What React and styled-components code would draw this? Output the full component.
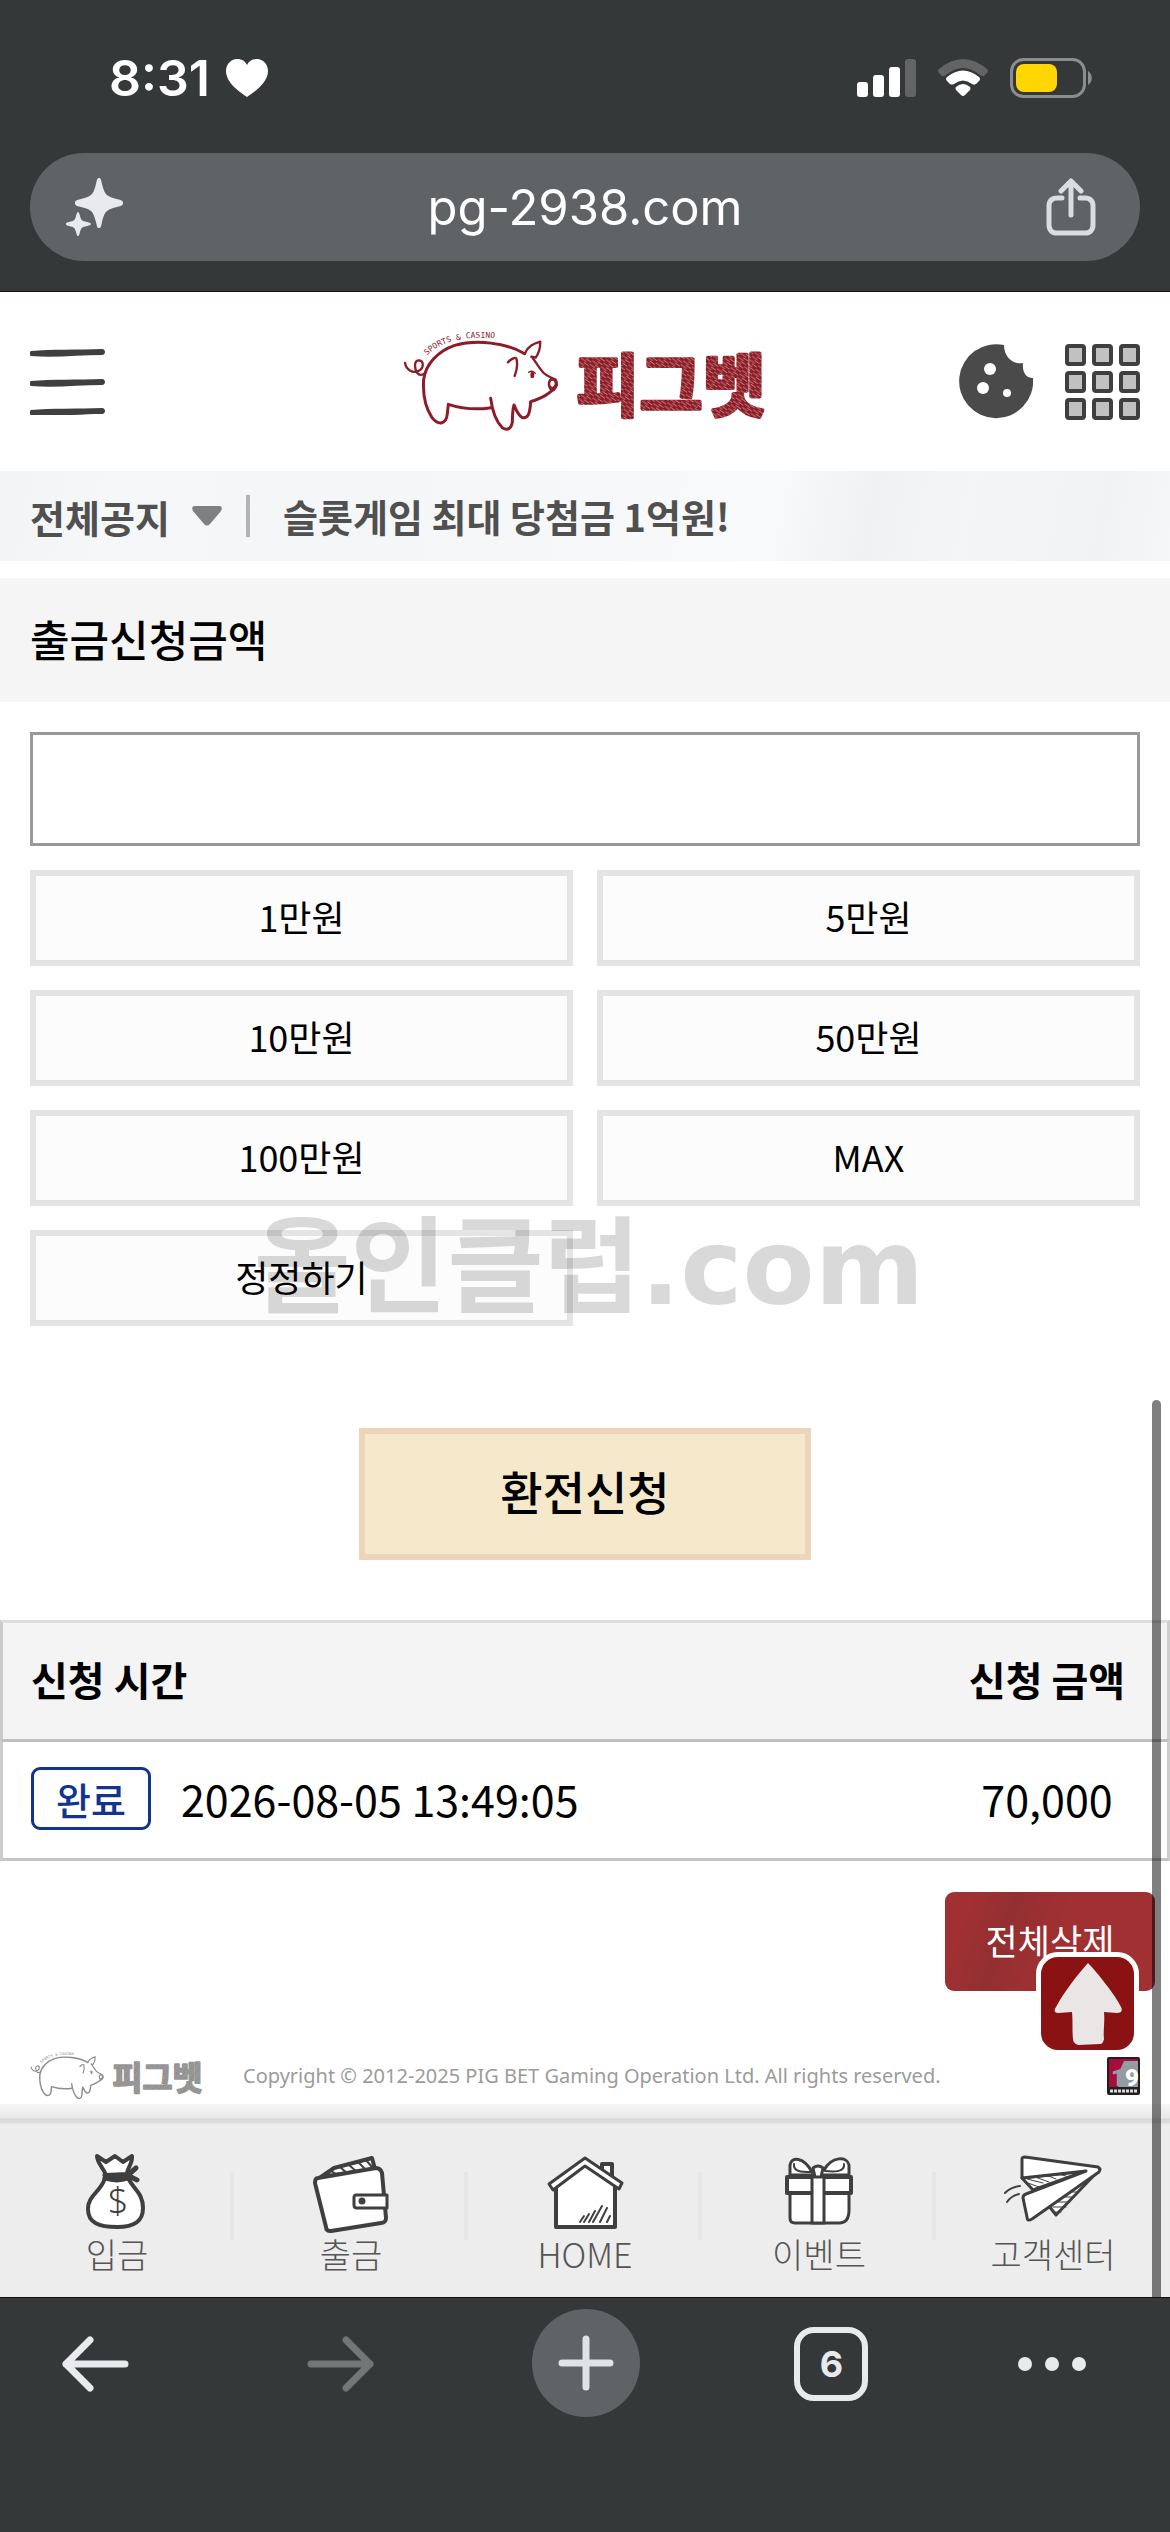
import styled, { createGlobalStyle } from "styled-components";

const chromeBg = "#353839";
const chromePill = "#5f6365";
const chromeInk = "#e8eaed";
const ink = "#3f3f3f";

const GlobalStyle = createGlobalStyle`
  * {
    box-sizing: border-box;
  }
  body {
    margin: 0;
    background: ${chromeBg};
    color: #000;
    font-family: "Noto Sans CJK KR", "Noto Sans", sans-serif;
  }
  button, input, select {
    font: inherit;
    color: inherit;
    margin: 0;
    padding: 0;
    border: 0;
    background: none;
  }
  a {
    color: inherit;
    text-decoration: none;
  }
  svg {
    display: block;
    flex: none;
  }
`;

const Screen = styled.div`
  display: flex;
  flex-direction: column;
  min-height: 100vh;
`;

/* browser chrome */

const BrowserTop = styled.header`
  background: ${chromeBg};
  border-bottom: 1px solid #111;
  padding-bottom: 30px;
  font-family: Inter, sans-serif;
`;

const StatusBar = styled.div`
  display: flex;
  align-items: center;
  justify-content: space-between;
  height: 153px;
  padding: 2px 77px 0 109px;
  color: #fff;
`;

const StatusGroup = styled.div`
  display: flex;
  align-items: center;
  gap: ${(props) => props.$gap}px;
`;

const Clock = styled.span`
  font-size: 50px;
  font-weight: 600;
`;

const AddressBar = styled.div`
  display: flex;
  align-items: center;
  height: 108px;
  margin: 0 30px;
  padding: 0 44px 0 36px;
  border-radius: 54px;
  background: ${chromePill};
`;

const Address = styled.input`
  flex: 1;
  min-width: 0;
  height: 100%;
  color: #fff;
  font-size: 49px;
  text-align: center;
`;

const IconButton = styled.button`
  display: flex;
  align-items: center;
  justify-content: center;
`;

const BrowserBottom = styled.nav`
  display: grid;
  grid-template-columns: 19fr 30fr 19fr 30fr 14fr;
  justify-items: center;
  align-items: start;
  flex: 1;
  min-height: 235px;
  padding: 11px 48px 0 0;
  border-top: 1px solid #111;
  background: ${chromeBg};
`;

const ToolButton = styled(IconButton)`
  width: 74px;
  height: 110px;
`;

const NewTab = styled(IconButton)`
  width: 108px;
  height: 108px;
  border-radius: 50%;
  background: ${chromePill};
`;

const TabCount = styled.span`
  display: flex;
  align-items: center;
  justify-content: center;
  width: 74px;
  height: 74px;
  border: 6px solid ${chromeInk};
  border-radius: 20px;
  color: ${chromeInk};
  font-family: Inter, sans-serif;
  font-size: 36px;
  font-weight: 700;
`;

/* site */

const Site = styled.div`
  position: relative;
  background: #fff;
`;

const ScrollThumb = styled.div`
  position: absolute;
  z-index: 3;
  top: 1108px;
  right: 9px;
  bottom: 0;
  width: 9px;
  border-radius: 5px 5px 0 0;
  background: rgba(0, 0, 0, 0.5);
`;

const SiteHeader = styled.header`
  display: grid;
  grid-template-columns: 1fr auto 1fr;
  align-items: center;
  height: 179px;
  padding: 0 30px;
`;

const MenuButton = styled(IconButton)`
  justify-self: start;
`;

const HeaderActions = styled.div`
  display: flex;
  justify-content: flex-end;
  gap: 32px;
`;

const NoticeBar = styled.div`
  display: flex;
  align-items: center;
  height: 90px;
  padding: 0 30px;
  background: linear-gradient(
    100deg,
    #f3f4f5,
    #f6f7f8 10%,
    #f4f6f7 30%,
    #f7f9fa 66%,
    #eff1f2 74%,
    #f3f5f6 82%,
    #f0f2f3 94%,
    #f6f7f8
  );
  color: #505050;
  font-size: 38px;
  font-weight: 700;
`;

const NoticeSelect = styled.div`
  display: flex;
  align-items: center;
  gap: 22px;
  margin-right: 24px;

  select {
    appearance: none;
    cursor: pointer;
  }
`;

const NoticeText = styled.span`
  padding-left: 33px;
  border-left: 4px solid #b4b4b4;
  line-height: 42px;
`;

const SectionTitle = styled.label`
  display: flex;
  align-items: center;
  height: 124px;
  margin-top: 17px;
  padding: 0 30px 4px;
  background: #f5f5f5;
  font-size: 43px;
  font-weight: 500;
`;

const Form = styled.form`
  padding: 30px 30px 60px;
`;

const AmountInput = styled.input`
  display: block;
  width: 100%;
  height: 114px;
  padding: 0 24px;
  border: 3px solid #999;
  background: #fff;
  font-size: 43px;
`;

const AmountGrid = styled.div`
  position: relative;
  display: grid;
  grid-template-columns: 1fr 1fr;
  gap: 24px;
  margin: 24px 0 102px;
`;

const AmountButton = styled.button`
  height: 96px;
  padding-bottom: 4px;
  border: 6px solid #e4e4e4;
  background: #fcfcfc;
  font-size: 36px;
`;

const Watermark = styled.div`
  position: absolute;
  left: 224px;
  bottom: -4px;
  color: rgba(0, 0, 0, 0.15);
  font-family: "DejaVu Sans", "Noto Sans CJK KR", sans-serif;
  font-size: 105px;
  font-weight: 700;
  line-height: 124px;
  white-space: nowrap;
  pointer-events: none;
`;

const SubmitButton = styled.button`
  display: block;
  width: 452px;
  height: 132px;
  margin: 0 auto;
  padding-bottom: 8px;
  border: 6px solid #edd5ba;
  background: #f6e8ca;
  font-size: 46px;
  font-weight: 500;
`;

const HistoryTable = styled.table`
  width: 100%;
  border-collapse: separate;
  border-spacing: 0;
  font-size: 43px;

  th {
    height: 119px;
    padding: 0 0 4px;
    border-top: 3px solid #ddd;
    background: #f4f4f4;
    font-size: 40px;
    font-weight: 700;
  }
  td {
    height: 122px;
    padding: 0 0 4px;
    border-top: 3px solid #bfbfbf;
    border-bottom: 3px solid #c4c4c4;
    text-align: center;
  }
  th:first-child,
  td:first-child {
    padding-left: 28px;
    border-left: 3px solid #ccc;
    text-align: left;
  }
  th:last-child,
  td:last-child {
    width: 243px;
    border-right: 3px solid #ccc;
  }
`;

const Stamp = styled.div`
  display: flex;
  align-items: center;
  gap: 30px;
`;

const StatusBadge = styled.span`
  display: flex;
  align-items: center;
  justify-content: center;
  width: 120px;
  height: 63px;
  border: 3px solid #12338f;
  border-radius: 9px;
  color: #12338f;
  font-size: 38px;
  font-weight: 500;
`;

const DeleteRow = styled.div`
  display: flex;
  justify-content: flex-end;
  position: relative;
  padding: 31px 15px 0;
`;

const DeleteButton = styled.button`
  width: 210px;
  height: 99px;
  padding-bottom: 4px;
  border-radius: 9px;
  background: linear-gradient(
    110deg,
    #a03032 12%,
    #932f31 30%,
    #a03032 52%,
    #a03032
  );
  color: #fff;
  font-size: 35px;
`;

const TopLink = styled.a`
  position: absolute;
  z-index: 2;
  right: 31px;
  bottom: -64px;
  display: flex;
  align-items: center;
  justify-content: center;
  width: 103px;
  height: 103px;
  border: 5px solid #fff;
  border-radius: 22px;
  background: #8a1213;
`;

const SiteFooter = styled.footer`
  display: flex;
  align-items: center;
  height: 56px;
  margin-top: 57px;
  padding: 0 30px;
`;

const Copyright = styled.p`
  flex: 1;
  margin: 0 0 0 40px;
  color: #9b9b9b;
  font-family: "Noto Sans", sans-serif;
  font-size: 20px;
  line-height: 24px;
`;

const TabBar = styled.nav`
  display: grid;
  grid-template-columns: repeat(5, 1fr);
  height: 193px;
  padding-top: 20px;
  background: linear-gradient(#f6f6f6, #e9e9e9 14px, #d9d9d9 15px, #dcdcdc 19px, #ededed 20px);
`;

const TabItem = styled.a`
  display: flex;
  flex-direction: column;
  align-items: center;
  padding-top: 28px;
  color: #555;
  font-size: 34px;
  font-weight: 300;
  line-height: 36px;
  background: ${(props) =>
    props.$last
      ? "none"
      : "linear-gradient(#e6e6e6, #e6e6e6) right 48px / 4px 68px no-repeat"};
`;

const drawn = {
  fill: "#fff",
  stroke: ink,
  strokeWidth: 4,
  strokeLinejoin: "round",
  strokeLinecap: "round",
};

const HeartIcon = () => (
  <svg width="42" height="38" viewBox="0 0 42 38" fill="#fff">
    <path d="M21 38C14 33 0 24 0 12 0 5 5 0 11 0c5 0 8 2 10 6C23 2 26 0 31 0c6 0 11 5 11 12 0 12-14 21-21 26Z" />
  </svg>
);

const SignalIcon = () => (
  <svg width="59" height="38" viewBox="0 0 59 38" fill="#fff">
    <rect x="0" y="23" width="11" height="15" rx="3" />
    <rect x="16" y="16" width="11" height="22" rx="3" />
    <rect x="32" y="8" width="11" height="30" rx="3" />
    <rect x="48" y="0" width="11" height="38" rx="3" fill="#626466" />
  </svg>
);

const WifiIcon = () => (
  <svg width="50" height="37" viewBox="0 0 50 37">
    <path d="M1 10Q25-10 49 10 51 12 49 14L46 17Q44 18 42 16 25 2 8 16 6 18 4 17L1 14Q-1 12 1 10Z" fill="#626466" />
    <path d="M9 18Q25 5 41 18 43 20 41 22L38 25Q36 26 34 25 25 18 16 25 14 26 12 25L9 22Q7 20 9 18Z" fill="#fff" />
    <path d="M18 28Q25 22 32 28 33 29 32 31L27 36Q25 38 23 36L18 31Q17 29 18 28Z" fill="#fff" />
  </svg>
);

const BatteryIcon = () => (
  <svg width="83" height="40" viewBox="0 0 83 40">
    <rect x="1.500" y="1.500" width="73" height="37" rx="12" fill="none" stroke="#8b8d8e" strokeWidth="3" />
    <rect x="6" y="6" width="41" height="28" rx="8" fill="#ffd600" />
    <path d="M78 13c5 3 5 11 0 14Z" fill="#8b8d8e" />
  </svg>
);

const SparkleIcon = () => (
  <svg width="58" height="58" viewBox="0 0 58 58" fill={chromeInk}>
    <path d="M33 0c2 0 2 2 3 6 3 11 4 12 15 15 5 1 6 2 6 4s-1 3-6 4c-11 3-12 4-15 15-1 4-1 6-3 6s-2-2-3-6c-3-11-4-12-15-15-5-1-6-2-6-4s1-3 6-4c11-3 12-4 15-15 1-4 1-6 3-6Z" />
    <path d="M12 34c1 0 1 1 2 4 1 4 2 5 7 6 3 1 4 1 4 2s-1 1-4 2c-5 1-6 2-7 6-1 3-1 4-2 4s-1-1-2-4c-1-4-2-5-7-6-3-1-3-1-3-2s0-1 3-2c5-1 6-2 7-6 1-3 1-4 2-4Z" />
  </svg>
);

const ShareIcon = () => (
  <svg width="50" height="58" viewBox="4 0 50 58" fill="none" stroke="#d9dce0" strokeWidth="5" strokeLinecap="round" strokeLinejoin="round">
    <path d="M20 20h-5c-5 0-8 3-8 8v19c0 5 3 8 8 8h28c5 0 8-3 8-8V28c0-5-3-8-8-8h-5M29 37V4M19 13 29 3l10 10" />
  </svg>
);

const MenuIcon = () => (
  <svg width="75" height="66" viewBox="0 0 75 66" fill={ink}>
    {[0, 30, 59].map((y) => (
      <path
        key={y}
        transform={`translate(0 ${y})`}
        d="M1 2C20 0 50 1 72 0c4 0 4 6 0 6C50 6 25 9 1 7-1 6-1 3 1 2Z"
      />
    ))}
  </svg>
);

const CookieIcon = () => (
  <svg width="74" height="76" viewBox="0 0 74 76">
    <path
      d="M45 1A37 37 0 1 0 74 34c-7 0-11-6-10-15-10 2-19-6-19-18Z"
      fill="#4a4a4a"
    />
    <circle cx="31" cy="25" r="6" fill="#fff" />
    <circle cx="24" cy="44" r="6" fill="#fff" />
    <circle cx="48" cy="49" r="4" fill="#fff" />
  </svg>
);

const GridIcon = () => (
  <svg width="75" height="76" viewBox="0 0 75 76">
    {[2, 29, 56].map((y) =>
      [2, 29, 56].map((x) => (
        <rect key={`${x}-${y}`} x={x} y={y} width="17" height="18" rx="2" fill="#c1c1c1" stroke={ink} strokeWidth="4" />
      ))
    )}
  </svg>
);

const Logo = ({ id, width, height, color, light }) => (
  <svg width={width} height={height} viewBox="70 63 1092 300" role="img" aria-label="피그벳">
    <defs>
      <pattern id={`${id}-hatch`} width="32" height="13" patternUnits="userSpaceOnUse" patternTransform="rotate(35)">
        <rect width="32" height="13" fill={color} />
        <path d="M0 3h20M14 9h18" stroke={light} strokeWidth="2" />
      </pattern>
      <path id={`${id}-arc`} d="M142 134C180 94 250 70 370 84" />
    </defs>
    <g fill="none" stroke={color} strokeWidth="9" strokeLinecap="round" strokeLinejoin="round">
      <path d="M435 128C380 95 290 85 225 103 175 120 138 160 132 205c-3 45 5 85 25 115 20 25 43 20 46-12l3-28c40 13 85 17 128 10" />
      <path d="M333 262c5 40 17 70 35 88 15 10 27 3 30-17 0-18 0-33 5-51 7 15 12 30 25 38 17 3 23-12 25-48 30-10 60-22 77-50" />
      <path d="M457 138c15 20 23 35 35 48 10 10 20 12 36 20 7 12 3 22-6 32-14 0-18-20-10-32" strokeWidth="7" />
      <path d="M435 128c10-23 27-30 47-36 0 18-7 38-14 48l-13-3" strokeWidth="7" />
      <path d="M385 154c8-10 22-16 25-12 5 18 0 40-5 53" strokeWidth="7" />
      <path d="M76 156c4 20 22 32 40 24 18-8 17-32 1-32-16 2-12 26-4 38 6 8 16 6 23 1" strokeWidth="7" />
      <ellipse cx="518" cy="218" rx="10" ry="12" strokeWidth="6" />
      <path d="M447 184q10-8 20 3" strokeWidth="4" />
    </g>
    <ellipse cx="458" cy="192" rx="6" ry="10" fill={color} />
    <text fontFamily="DejaVu Sans Mono, monospace" fontSize="24" fill={color}>
      <textPath href={`#${id}-arc`}>SPORTS &amp; CASINO</textPath>
    </text>
    <text
      x="590"
      y="300"
      fontFamily="Noto Sans CJK KR, sans-serif"
      fontSize="206"
      fontWeight="700"
      fill={`url(#${id}-hatch)`}
      stroke={`url(#${id}-hatch)`}
      strokeWidth="11"
      strokeLinejoin="round"
    >
      피그벳
    </text>
  </svg>
);

const ArrowUpIcon = () => (
  <svg width="68" height="84" viewBox="0 0 68 84" fill="#eae6e6">
    <path d="M34 1c8 8 28 33 33 44 2 4 0 6-4 6l-13-1c1 10-1 20 0 27-1 4-2 5-4 5l-22 1c-3-1-5-3-5-6-1-9 0-17-1-27l-14 1c-4 0-4-3-2-6C10 30 24 12 34 1Z" />
  </svg>
);

const AdultIcon = () => (
  <svg width="33" height="38" viewBox="0 0 33 38">
    <rect width="33" height="38" rx="2" fill="#231f20" />
    <path d="M2 2h29v28H2Z" fill="#a50d3d" />
    <path d="M17 4h14v26H11V17Z" fill="#949ba1" />
    <text x="4" y="29" fontFamily="Roboto, sans-serif" fontSize="24" fontWeight="900" fill="#949ba1">
      1<tspan fill="#fff">9</tspan>
    </text>
    <path d="M3 34h27" stroke="#ddd" strokeWidth="3" strokeDasharray="3 1" />
  </svg>
);

const BagIcon = () => (
  <svg width="72" height="84" viewBox="2 0 72 84" {...drawn}>
    <path d="M27 23C24 15 18 11 18 4l9 6 9-6 8 6 9-6c1 7-5 12-5 18Z" />
    <path d="M26 26C22 40 9 43 9 57c0 14 11 18 29 18s26-6 26-19c0-15-9-18-15-30Z" />
    <path d="M26 23q12 4 23 0M26 26q12 4 23 0M49 23l8-7M50 24l8 4" strokeWidth="5" />
    <text x="39" y="62" textAnchor="middle" fontFamily="Noto Sans, sans-serif" fontSize="36" fill={ink} stroke="none">
      $
    </text>
  </svg>
);

const WalletIcon = () => (
  <svg width="84" height="84" viewBox="2 0 84 84" {...drawn}>
    <path d="M14 25 27 16 65 6l3 11Z" />
    <path d="m24 19 7 4M33 15l8 7M42 13l8 7M51 10l8 8M59 8l6 7" strokeWidth="2" />
    <path d="m11 26 58-10c3 0 5 2 6 5l4 45c0 3-2 5-5 5l-50 8c-3 0-5-1-5-4L8 31c0-3 1-5 3-5Z" />
    <path d="M49 43h31v13H50c-2 0-3-1-3-3v-8c0-1 1-2 2-2Z" strokeWidth="3" />
    <circle cx="55" cy="49" r="2" strokeWidth="3" fill={ink} />
  </svg>
);

const HouseIcon = () => (
  <svg width="84" height="84" viewBox="1 0 84 84" {...drawn}>
    <path d="M60 24V12h10v20Z" />
    <path d="M14 32v43h59V32L43 12Z" />
    <path d="M43 6 7 32l4 6 32-24 34 23 3-6Z" strokeWidth="3" />
    <path d="m38 70 4-6M42 70l5-8M47 70l6-11M51 70l9-16M58 70l7-14M65 70l3-6" strokeWidth="2" />
  </svg>
);

const GiftIcon = () => (
  <svg width="84" height="84" viewBox="0 0 84 84" {...drawn}>
    <path d="M13 40v26q0 5 5 5h44c8 0 10-6 10-13V40Z" strokeWidth="3" />
    <path d="M35 20C27 5 14 4 13 13v10h59V13C70 4 55 4 47 18" strokeWidth="3" />
    <path d="M17 12c-1 8 8 8 17 8M67 12c1 8-9 8-19 7" strokeWidth="2" fill="none" />
    <path d="M10 25h64v16H10Z" />
    <path d="M35 25h12v46H35ZM36 16q5-4 10 0l-2 9h-6Z" strokeWidth="3" />
  </svg>
);

const PlaneIcon = () => (
  <svg width="104" height="84" viewBox="0 0 104 84" {...drawn} strokeWidth="3">
    <path d="M48 54 55 63 99 17Z" />
    <path d="M52 60h8M52 55h13M56 50h13M62 45h11M66 40h10" strokeWidth="1" />
    <path d="M21 26 32 38 85 19Z" />
    <path d="m26 27 16 4M24 30l14 5M34 25l14 5M45 23l10 4M57 22l8 2" strokeWidth="1" />
    <path d="M21 7q0-2 3-2l73 10q3 2 1 5L31 67q-5 3-5-2L22 46q0-3 3-4L85 19 21 26Z" />
    <path d="M4 41q6-6 15-7M6 50q4-6 12-8" strokeWidth="2" fill="none" />
  </svg>
);

const AMOUNTS = ["1만원", "5만원", "10만원", "50만원", "100만원", "MAX", "정정하기"];

const TABS = [
  { label: "입금", Icon: BagIcon },
  { label: "출금", Icon: WalletIcon },
  { label: "HOME", Icon: HouseIcon },
  { label: "이벤트", Icon: GiftIcon },
  { label: "고객센터", Icon: PlaneIcon },
];

const line = { fill: "none", strokeWidth: 7, strokeLinecap: "round", strokeLinejoin: "round" };

export default function App() {
  return (
    <Screen>
      <GlobalStyle />
      <BrowserTop>
        <StatusBar>
          <StatusGroup $gap={16}>
            <Clock>8:31</Clock>
            <HeartIcon />
          </StatusGroup>
          <StatusGroup $gap={22}>
            <SignalIcon />
            <WifiIcon />
            <BatteryIcon />
          </StatusGroup>
        </StatusBar>
        <AddressBar>
          <IconButton aria-label="AI">
            <SparkleIcon />
          </IconButton>
          <Address aria-label="URL" defaultValue="pg-2938.com" />
          <IconButton aria-label="공유">
            <ShareIcon />
          </IconButton>
        </AddressBar>
      </BrowserTop>

      <Site>
        <SiteHeader>
          <MenuButton aria-label="메뉴">
            <MenuIcon />
          </MenuButton>
          <a href="#home">
            <Logo id="main" width={364} height={100} color="#8c1c27" light="#dba7a0" />
          </a>
          <HeaderActions>
            <IconButton aria-label="쿠키">
              <CookieIcon />
            </IconButton>
            <IconButton aria-label="전체메뉴">
              <GridIcon />
            </IconButton>
          </HeaderActions>
        </SiteHeader>

        <NoticeBar>
          <NoticeSelect>
            <select aria-label="공지">
              <option>전체공지</option>
            </select>
            <svg width="30" height="20" viewBox="0 0 30 20">
              <path d="M2 0h26q3 1 1 5L18 18q-3 3-6 0L1 5Q-1 1 2 0Z" fill="#808080" />
            </svg>
          </NoticeSelect>
          <NoticeText>슬롯게임 최대 당첨금 1억원!</NoticeText>
        </NoticeBar>

        <SectionTitle htmlFor="amount">출금신청금액</SectionTitle>
        <Form onSubmit={(e) => e.preventDefault()}>
          <AmountInput id="amount" type="text" inputMode="numeric" />
          <AmountGrid>
            {AMOUNTS.map((amount) => (
              <AmountButton key={amount} type="button">
                {amount}
              </AmountButton>
            ))}
            <Watermark>올인클럽.com</Watermark>
          </AmountGrid>
          <SubmitButton type="submit">환전신청</SubmitButton>
        </Form>

        <HistoryTable>
          <thead>
            <tr>
              <th scope="col">신청 시간</th>
              <th scope="col">신청 금액</th>
            </tr>
          </thead>
          <tbody>
            <tr>
              <td>
                <Stamp>
                  <StatusBadge>완료</StatusBadge>
                  <span>2026-08-05 13:49:05</span>
                </Stamp>
              </td>
              <td>70,000</td>
            </tr>
          </tbody>
        </HistoryTable>

        <DeleteRow>
          <DeleteButton type="button">전체삭제</DeleteButton>
          <TopLink href="#top" aria-label="맨 위로">
            <ArrowUpIcon />
          </TopLink>
        </DeleteRow>

        <SiteFooter>
          <Logo id="foot" width={173} height={48} color="#8c8c8c" light="#c4c4c4" />
          <Copyright>
            Copyright © 2012-2025 PIG BET Gaming Operation Ltd. All rights reserved.
          </Copyright>
          <AdultIcon />
        </SiteFooter>

        <TabBar>
          {TABS.map(({ label, Icon }, i) => (
            <TabItem key={label} href={`#tab-${i}`} $last={i === TABS.length - 1}>
              <Icon />
              {label}
            </TabItem>
          ))}
        </TabBar>
        <ScrollThumb />
      </Site>

      <BrowserBottom>
        <ToolButton aria-label="뒤로">
          <svg width="68" height="56" viewBox="0 0 68 56" stroke={chromeInk} {...line}>
            <path d="M64 28H5M29 4 5 28l24 24" />
          </svg>
        </ToolButton>
        <ToolButton aria-label="앞으로">
          <svg width="68" height="56" viewBox="0 0 68 56" stroke="#727677" {...line}>
            <path d="M4 28h59M39 4l24 24-24 24" />
          </svg>
        </ToolButton>
        <NewTab aria-label="새 탭">
          <svg width="56" height="56" viewBox="0 0 56 56" stroke="#dfe2e6" {...line}>
            <path d="M28 4v48M4 28h48" />
          </svg>
        </NewTab>
        <ToolButton aria-label="탭">
          <TabCount>6</TabCount>
        </ToolButton>
        <ToolButton aria-label="더보기">
          <svg width="68" height="14" viewBox="0 0 68 14" fill={chromeInk}>
            <circle cx="7" cy="7" r="7" />
            <circle cx="34" cy="7" r="7" />
            <circle cx="61" cy="7" r="7" />
          </svg>
        </ToolButton>
      </BrowserBottom>
    </Screen>
  );
}
